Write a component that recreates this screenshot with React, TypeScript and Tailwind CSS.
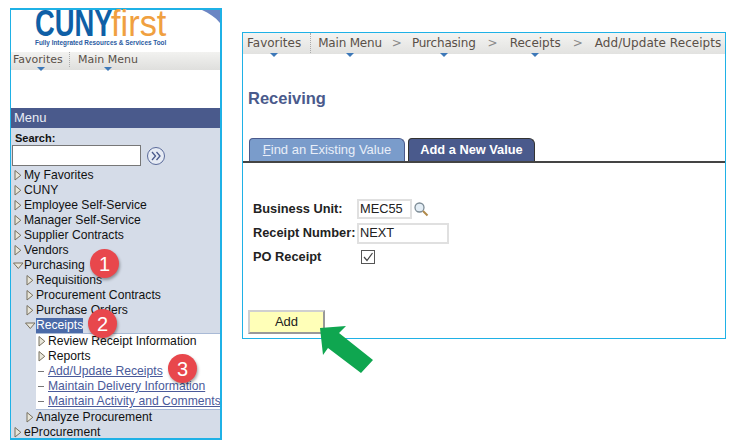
import React from "react";

const arial = "font-['Liberation_Sans',Arial,sans-serif]";
const nav = "font-['DejaVu_Sans',sans-serif]";

function Tri({ open }: { open?: boolean }) {
  return open ? (
    <svg width="11" height="8" viewBox="0 0 11 8" className="shrink-0 -ml-[1px]">
      <path d="M0.5 1 H10 L5.3 6.5 Z" fill="#e8e6da" stroke="#77705f" strokeWidth="1" />
    </svg>
  ) : (
    <svg width="8" height="11" viewBox="0 0 8 11" className="shrink-0">
      <path d="M1 0.5 V10 L6.8 5.3 Z" fill="#e8e6da" stroke="#77705f" strokeWidth="1" />
    </svg>
  );
}

function Row({
  label,
  indent = 0,
  open,
  selected,
}: {
  label: string;
  indent?: number;
  open?: boolean;
  selected?: boolean;
}) {
  return (
    <div className="flex h-[15px] items-center" style={{ paddingLeft: indent }}>
      <div className="flex w-[11px] shrink-0 items-center justify-start pl-[1px]">
        <Tri open={open} />
      </div>
      <span className={selected ? "bg-[#4a6aa8] leading-[15px] text-white" : "leading-[15px] text-[#111]"}>{label}</span>
    </div>
  );
}

function LinkRow({ label }: { label: string }) {
  return (
    <div className="flex h-[15px] items-center">
      <div className="mr-[4px] ml-[1px] h-px w-[6px] shrink-0 bg-[#777]" />
      <span className="whitespace-nowrap leading-[15px] text-[#4a5a9a] underline">{label}</span>
    </div>
  );
}

function Caret() {
  return <div className="mx-auto h-0 w-0 border-x-[4px] border-t-[4px] border-x-transparent border-t-[#3d78b8]" />;
}

function NavItem({ label, caret = true }: { label: string; caret?: boolean }) {
  return (
    <div className="relative whitespace-nowrap text-[#5a5048]">
      {label}
      {caret && (
        <div className="absolute bottom-[-4px] left-0 right-0">
          <Caret />
        </div>
      )}
    </div>
  );
}

function Badge({ n, className }: { n: number; className: string }) {
  return (
    <div
      className={`absolute flex h-[29px] w-[29px] items-center justify-center rounded-full bg-[#e8474c] text-[20px] text-white shadow-[1px_2px_3px_rgba(0,0,0,0.35)] ${arial} ${className}`}
    >
      {n}
    </div>
  );
}

export default function App() {
  return (
    <div className={`relative h-[448px] w-[735px] overflow-hidden bg-white ${arial}`}>
      <div className="flex items-start pl-[10px] pt-[8px]">
        {/* Left panel */}
        <div className="h-[432px] w-[212px] shrink-0 border-2 border-l border-[#1fb1e6] bg-white">
          <div className="relative h-[42px]">
            <div className="flex h-[28px] items-start pl-[24px]">
              <span className="inline-block w-[73px] origin-left scale-x-[0.74] whitespace-nowrap text-[37px] font-bold leading-[28px] text-[#0f5fa6]">
                CUNY
              </span>
              <span className="ml-[3px] inline-block w-[56px] origin-left scale-x-[0.93] whitespace-nowrap text-[37px] leading-[28px] text-[#f0a040]">
                first
              </span>
            </div>
            <div className="pl-[24px] text-[6.4px] font-bold leading-[9px] text-[#2a5aa0] whitespace-nowrap">
              Fully Integrated Resources &amp; Services Tool
            </div>
            <svg className="absolute right-0 top-0" width="18" height="13" viewBox="0 0 18 13">
              <path d="M0 0 H18 V13 C13 7 7 3 0 0Z" fill="#6b86c4" />
            </svg>
          </div>
          <div className={`flex h-[18px] items-start bg-gradient-to-b from-[#f2f2f0] to-[#dfdfdd] pl-[2px] text-[11px] leading-[15px] ${nav}`}>
            <div className="w-[57px] border-r border-dotted border-[#aaa]">
              <NavItem label="Favorites" />
            </div>
            <div className="ml-[8px]">
              <NavItem label="Main Menu" />
            </div>
          </div>
          <div className="h-[38px]" />
          <div className="flex h-[20px] items-center bg-[#4a5a8c] pl-[3px] text-[13px] text-[#e8ecf4]">Menu</div>
          <div className="h-[310px] overflow-hidden bg-[#d5dce8] text-[12.15px]">
            <div className="pl-[4px] pt-[3px] text-[11px] font-bold leading-[14px] text-[#111]">Search:</div>
            <div className="flex items-center pl-[1px]">
              <div className="h-[21px] w-[129px] border border-[#777] bg-white" />
              <div className="ml-[6px] flex h-[18px] w-[18px] items-center justify-center rounded-full border border-[#5a6a9a] bg-[#e6ebf4]">
                <svg width="12" height="10" viewBox="0 0 12 10" fill="none" stroke="#4a5a8c" strokeWidth="1.3">
                  <path d="M2 1l3.5 4L2 9M6.5 1l3.5 4-3.5 4" />
                </svg>
              </div>
            </div>
            <div className="pl-[2px] pt-[2px]">
              <Row label="My Favorites" />
              <Row label="CUNY" />
              <Row label="Employee Self-Service" />
              <Row label="Manager Self-Service" />
              <Row label="Supplier Contracts" />
              <Row label="Vendors" />
              <Row label="Purchasing" open />
              <Row label="Requisitions" indent={12} />
              <Row label="Procurement Contracts" indent={12} />
              <Row label="Purchase Orders" indent={12} />
              <Row label="Receipts" indent={12} open selected />
              <div className="ml-[23px] border-y border-[#a9bad6] bg-white pl-[1px]">
                <Row label="Review Receipt Information" />
                <Row label="Reports" />
                <LinkRow label="Add/Update Receipts" />
                <LinkRow label="Maintain Delivery Information" />
                <LinkRow label="Maintain Activity and Comments" />
              </div>
              <Row label="Analyze Procurement" indent={12} />
              <Row label="eProcurement" />
            </div>
          </div>
        </div>

        {/* Right panel */}
        <div className="ml-[20px] mt-[24px] h-[307px] w-[484px] shrink-0 border border-[#1fb1e6] bg-white">
          <div className={`flex h-[21px] items-start bg-gradient-to-b from-[#f4f4f2] to-[#e2e2e0] pl-[4px] text-[12px] leading-[20px] ${nav}`}>
            <div className="border-r border-dotted border-[#aaa] pr-[9px]">
              <NavItem label="Favorites" />
            </div>
            <div className="ml-[7px] tracking-[-0.2px]"><NavItem label="Main Menu" /></div>
            <span className="px-[10px] text-[#8a8a8a]">&gt;</span>
            <div className="tracking-[-0.2px]"><NavItem label="Purchasing" /></div>
            <span className="px-[12px] text-[#8a8a8a]">&gt;</span>
            <NavItem label="Receipts" />
            <span className="px-[12px] text-[#8a8a8a]">&gt;</span>
            <div className="tracking-[0.05px]"><NavItem label="Add/Update Receipts" caret={false} /></div>
          </div>
          <div className="pl-[5px] pt-[35px] text-[16.5px] font-bold leading-[18px] text-[#4a5a8c]">Receiving</div>
          <div className="mt-[32px] flex h-[24px] items-end border-b-2 border-[#444] pl-[6px] text-[12.8px] font-bold">
            <div className="flex h-[23px] w-[156px] items-center justify-center rounded-tl-[4px] rounded-tr-[6px] border border-[#4a5a8c] border-b-0 bg-[#7a9ccb] text-[13px] font-normal text-[#e8eef8]">
              <span><span className="underline">F</span>ind an Existing Value</span>
            </div>
            <div className="ml-[3px] flex h-[23px] w-[127px] items-center justify-center rounded-tl-[4px] rounded-tr-[6px] border border-[#333] border-b-0 bg-[#4a5a8c] text-white">
              Add a New Value
            </div>
          </div>
          <div className="grid grid-cols-[104px_auto] content-start items-center pl-[10px] pt-[34px] text-[12.8px] font-bold text-[#222]">
            <div className="h-[24px] leading-[24px]">Business Unit:</div>
            <div className="flex h-[24px] items-center">
              <div className="flex h-[20px] w-[55px] items-center border-2 border-[#e0e0e0] pl-[1px] font-normal text-[#222]">MEC55</div>
              <svg width="16" height="16" viewBox="0 0 16 16" className="ml-[1px]" fill="none">
                <circle cx="6.5" cy="6.5" r="4.5" fill="#e4eef6" stroke="#7d8c96" strokeWidth="1.3" />
                <path d="M10 10l4.5 4.5" stroke="#b08a4a" strokeWidth="2" />
              </svg>
            </div>
            <div className="h-[24px] leading-[24px] whitespace-nowrap">Receipt Number:</div>
            <div className="flex h-[24px] items-center">
              <div className="flex h-[21px] w-[92px] items-center border-2 border-[#e0e0e0] pl-[1px] font-normal text-[#222]">NEXT</div>
            </div>
            <div className="h-[24px] leading-[24px]">PO Receipt</div>
            <div className="flex h-[24px] items-center pl-[4px]">
              <div className="flex h-[14px] w-[14px] items-center justify-center border border-[#555] bg-white">
                <svg width="12" height="12" viewBox="0 0 12 12" fill="none" stroke="#444" strokeWidth="1.2">
                  <path d="M2 6l3 3.5L10.5 2" />
                </svg>
              </div>
            </div>
          </div>
          <div className="mt-[41px] ml-[5px] flex h-[24px] w-[77px] items-center justify-center border-2 border-[#d0d0d0] border-b-[#999] border-r-[#999] bg-[#ffffb8] text-[13px] text-[#222]">
            Add
          </div>
        </div>
      </div>

      <Badge n={1} className="left-[90px] top-[249px]" />
      <Badge n={2} className="left-[88px] top-[309px]" />
      <Badge n={3} className="left-[168px] top-[354px]" />
      <svg className="absolute left-[316px] top-[322px]" width="60" height="56" viewBox="0 0 60 56">
        <path d="M4 6 L30 4 L23 11 L57 38 L45 51 L12 26 L7 33 Z" fill="#0fa650" />
      </svg>
    </div>
  );
}
